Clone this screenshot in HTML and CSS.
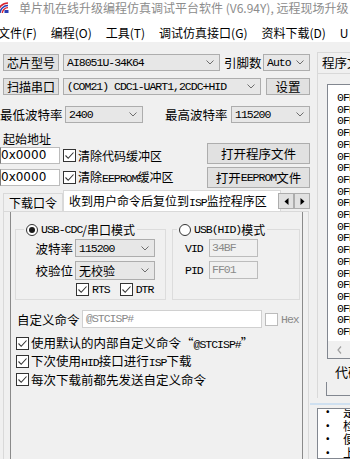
FILE: index.html
```html
<!DOCTYPE html>
<html lang="zh-CN">
<head>
<meta charset="utf-8">
<title>STC-ISP</title>
<link rel="stylesheet" href="styles.css">
</head>
<body>
<div class="window">
  <div class="titlebar">
    <svg class="appicon" viewBox="0 0 12 12" width="12" height="12">
      <path d="M0 11 A10 10 0 0 1 10 1" fill="none" stroke="#d9232d" stroke-width="1.6"/>
      <path d="M2 11 A8 8 0 0 1 10 3.5" fill="none" stroke="#2b3fb3" stroke-width="1.4"/>
      <path d="M4.3 11 A5.7 5.7 0 0 1 10 5.6" fill="none" stroke="#d9232d" stroke-width="1.4"/>
      <rect x="6.5" y="8" width="4" height="3" fill="#2b3fb3"/>
    </svg>
    <span class="title">单片机在线升级编程仿真调试平台软件 (V6.94Y), 远程现场升级</span>
  </div>
  <div class="menubar">
    <span class="mi first">文件(F)</span>
    <span class="mi">编程(O)</span>
    <span class="mi">工具(T)</span>
    <span class="mi">调试仿真接口(G)</span>
    <span class="mi">资料下载(D)</span>
    <span class="mi">U</span>
  </div>
  <div class="main">
    <div class="left">
      <div class="row r1">
        <div class="btn b-chip">芯片型号</div>
        <div class="combo c-chip"><span class="mono">AI8051U-34K64</span><svg class="chev" viewBox="0 0 8 5"><polyline points="0.5,0.5 4,4 7.5,0.5"/></svg></div>
        <span class="lbl l-pins">引脚数</span>
        <div class="combo c-pins"><span class="mono">Auto</span><svg class="chev" viewBox="0 0 8 5"><polyline points="0.5,0.5 4,4 7.5,0.5"/></svg></div>
      </div>
      <div class="row r2">
        <div class="btn b-chip">扫描串口</div>
        <div class="combo c-port"><span class="mono">(COM21) CDC1-UART1,2CDC+HID</span><svg class="chev" viewBox="0 0 8 5"><polyline points="0.5,0.5 4,4 7.5,0.5"/></svg></div>
        <div class="btn b-set">设置</div>
      </div>
      <div class="row r3">
        <span class="lbl l-baud">最低波特率</span>
        <div class="combo c-baud"><span class="mono">2400</span><svg class="chev" viewBox="0 0 8 5"><polyline points="0.5,0.5 4,4 7.5,0.5"/></svg></div>
        <span class="lbl l-baud2">最高波特率</span>
        <div class="combo c-baud2"><span class="mono">115200</span><svg class="chev" viewBox="0 0 8 5"><polyline points="0.5,0.5 4,4 7.5,0.5"/></svg></div>
      </div>
      <div class="addr-title">起始地址</div>
      <div class="addr-grid">
        <div class="addr-col">
          <div class="arow">
            <div class="edit addr">0x0000</div>
            <span class="chk on"><svg viewBox="0 0 11 11"><polyline points="1.5,5.5 4.2,8.3 9.5,2.5"/></svg></span>
            <span class="lbl">清除代码缓冲区</span>
          </div>
          <div class="arow">
            <div class="edit addr">0x0000</div>
            <span class="chk on"><svg viewBox="0 0 11 11"><polyline points="1.5,5.5 4.2,8.3 9.5,2.5"/></svg></span>
            <span class="lbl">清除<span class="mono">EEPROM</span>缓冲区</span>
          </div>
        </div>
        <div class="btn-col">
          <div class="btn b-open">打开程序文件</div>
          <div class="btn b-open">打开<span class="mono">EEPROM</span>文件</div>
        </div>
      </div>
      <div class="tabs">
        <div class="tab">下载口令</div>
        <div class="tab sel">收到用户命令后复位到<span class="mono">ISP</span>监控程序区</div>
        <div class="tabarrows">
          <span class="ta"><svg viewBox="0 0 5 7"><polygon points="4.5,0 0.5,3.5 4.5,7"/></svg></span>
          <span class="ta"><svg viewBox="0 0 5 7"><polygon points="0.5,0 4.5,3.5 0.5,7"/></svg></span>
        </div>
      </div>
      <div class="tabctl">
        <div class="page">
          <div class="groups">
            <fieldset class="grp g-cdc">
              <legend><span class="radio on"></span><span class="mono">USB-CDC</span>/串口模式</legend>
              <div class="frow"><span class="lbl flbl">波特率</span><div class="combo c-g"><span class="mono">115200</span><svg class="chev" viewBox="0 0 8 5"><polyline points="0.5,0.5 4,4 7.5,0.5"/></svg></div></div>
              <div class="frow f2"><span class="lbl flbl">校验位</span><div class="combo c-g"><span>无校验</span><svg class="chev" viewBox="0 0 8 5"><polyline points="0.5,0.5 4,4 7.5,0.5"/></svg></div></div>
              <div class="frow small">
                <span class="chk on"><svg viewBox="0 0 11 11"><polyline points="1.5,5.5 4.2,8.3 9.5,2.5"/></svg></span><span class="mono">RTS</span>
                <span class="chk on sp"><svg viewBox="0 0 11 11"><polyline points="1.5,5.5 4.2,8.3 9.5,2.5"/></svg></span><span class="mono">DTR</span>
              </div>
            </fieldset>
            <fieldset class="grp g-hid">
              <legend><span class="radio"></span><span class="mono">USB(HID)</span>模式</legend>
              <div class="hrow"><span class="mono hl">VID</span><div class="edit dis mono">34BF</div></div>
              <div class="hrow h2"><span class="mono hl">PID</span><div class="edit dis mono">FF01</div></div>
            </fieldset>
          </div>
          <div class="cmdrow">
            <span class="lbl cl">自定义命令</span>
            <div class="edit cmd mono">@STCISP#</div>
            <span class="chk dis"></span><span class="mono hex">Hex</span>
          </div>
          <div class="opts">
            <div class="opt"><span class="chk on"><svg viewBox="0 0 11 11"><polyline points="1.5,5.5 4.2,8.3 9.5,2.5"/></svg></span><span class="lbl">使用默认的内部自定义命令“<span class="mono">@STCISP#</span>”</span></div>
            <div class="opt"><span class="chk on"><svg viewBox="0 0 11 11"><polyline points="1.5,5.5 4.2,8.3 9.5,2.5"/></svg></span><span class="lbl">下次使用<span class="mono">HID</span>接口进行<span class="mono">ISP</span>下载</span></div>
            <div class="opt"><span class="chk on"><svg viewBox="0 0 11 11"><polyline points="1.5,5.5 4.2,8.3 9.5,2.5"/></svg></span><span class="lbl">每次下载前都先发送自定义命令</span></div>
          </div>
        </div>
      </div>
    </div>
    <div class="right">
      <div class="rtabs"><div class="rtab">程序文件</div></div>
      <div class="rpanel">
        <div class="listbox">
          <div class="lines mono">
            <div>0FFFFF</div><div>0FFFFF</div><div>0FFFFF</div><div>0FFFFF</div><div>0FFFFF</div>
            <div>0FFFFF</div><div>0FFFFF</div><div>0FFFFF</div><div>0FFFFF</div><div>0FFFFF</div>
            <div>0FFFFF</div><div>0FFFFF</div><div>0FFFFF</div><div>0FFFFF</div><div>0FFFFF</div>
            <div>0FFFFF</div><div>0FFFFF</div><div>0FFFFF</div><div>0FFFFF</div><div>0FFFFF</div>
            <div>0FFFFF</div>
          </div>
          <div class="hscroll"><svg viewBox="0 0 5 8"><polyline points="4,0.5 1,4 4,7.5"/></svg></div>
        </div>
        <div class="rlabel">代码</div>
        <div class="rbox"></div>
      </div>
      <div class="splitter"></div>
      <div class="notes">
        <div class="note"><i>·</i><span>是</span></div>
        <div class="note"><i>·</i><span>检</span></div>
        <div class="note"><i>·</i><span>便</span></div>
        <div class="note"><i>·</i><span>上</span></div>
      </div>
    </div>
  </div>
</div>
</body>
</html>
```

FILE: styles.css
```css
* { box-sizing: border-box; }
html, body { margin: 0; padding: 0; }
body {
  width: 350px; height: 459px; overflow: hidden;
  background: #f0f0f0;
  font-family: "Noto Sans CJK SC", "Noto Sans", sans-serif;
  font-size: 12px; color: #000;
}
.window { width: 350px; height: 459px; overflow: hidden; }
.mono { font-family: "Liberation Mono", "DejaVu Sans Mono", monospace; font-size: 11.5px; letter-spacing: -1px; }

.titlebar {
  height: 20px; background: #fff; display: flex; align-items: center;
  white-space: nowrap; overflow: hidden;
}
.appicon { margin-left: -2px; margin-top: -4px; flex: none; }
.title { margin-left: 9px; color: #8c8c8c; font-size: 12px; line-height: 16px; margin-top: -4px; }

.menubar {
  height: 22px; background: #fff; display: flex; align-items: center;
  white-space: nowrap; overflow: hidden; font-size: 12px; padding-top: 3px;
}
.mi { padding: 0 7px; line-height: 18px; }
.mi.first { margin-left: -9px; }

.main { display: flex; height: 417px; }
.left { width: 310px; flex: none; padding-top: 12px; }
.right { flex: 1; min-width: 0; display: flex; flex-direction: column; }

.row { display: flex; align-items: center; height: 17px; }
.r1 { padding-left: 3px; }
.r2 { padding-left: 3px; margin-top: 7px; }
.r3 { margin-top: 11px; }

.btn {
  background: #e1e1e1; border: 1px solid #adadad;
  display: flex; align-items: center; justify-content: center;
  height: 17px; font-size: 12px; line-height: 15px; white-space: nowrap;
}
.lbl { white-space: nowrap; font-size: 12px; line-height: 15px; }
.combo {
  background: #e7e7e7; border: 1px solid #adadad; height: 17px;
  display: flex; align-items: center; padding-left: 3px;
  white-space: nowrap;
}
.combo > span { flex: 1; overflow: hidden; line-height: 15px; }
.chev { width: 8px; height: 5px; flex: none; margin-right: 5px; }
.chev polyline { fill: none; stroke: #6d6d6d; stroke-width: 1; }

.b-chip { width: 56px; }
.c-chip { width: 157px; margin-left: 4px; }
.l-pins { margin-left: 4px; width: 39px; font-size: 12.5px; }
.c-pins { width: 47px; }
.c-port { width: 199px; margin-left: 4px; }
.b-set { width: 44px; margin-left: 5px; font-size: 12.5px; }
.l-baud { width: 65px; font-size: 12.5px; }
.c-baud { width: 78px; }
.l-baud2 { margin-left: 22px; width: 66px; font-size: 12.5px; }
.c-baud2 { width: 79px; }

.addr-title { margin: 8px 0 0 3px; font-size: 12px; line-height: 15px; height: 15px; }
.addr-grid { display: flex; justify-content: space-between; width: 310px; height: 42px; }
.addr-col { display: flex; flex-direction: column; gap: 5px; padding-top: 1px; }
.arow { display: flex; align-items: center; height: 17px; }
.edit {
  background: #fff; border: 1px solid #bcbcbc; height: 17px; line-height: 15px;
  padding-left: 1px; white-space: nowrap; overflow: hidden;
}
.edit.addr { width: 60px; font-family: "DejaVu Sans", "Noto Sans", sans-serif; font-size: 12px; padding-left: 0; border-left-color: #7a7a7a; }
.arow .chk { margin-left: 3px; margin-right: 2px; }
.btn-col { display: flex; flex-direction: column; gap: 3px; margin-top: -3px; }
.b-open { width: 103px; height: 21px; font-size: 12.5px; }

.chk {
  width: 13px; height: 13px; border: 1px solid #333; background: #fff;
  display: inline-flex; align-items: center; justify-content: center; flex: none;
}
.chk svg { width: 11px; height: 11px; }
.chk polyline { fill: none; stroke: #333; stroke-width: 1.1; }
.chk.dis { border-color: #bcbcbc; }

.tabs { display: flex; align-items: flex-end; height: 21px; margin-top: 2px; position: relative; width: 310px; }
.tab {
  height: 18px; border: 1px solid #d9d9d9; border-bottom: none; background: #f0f0f0;
  padding: 0 5px; font-size: 12px; line-height: 17px; white-space: nowrap; margin-left: 3px;
}
.tab.sel { height: 21px; background: #fff; margin-left: 0; line-height: 20px; padding: 0 5px; overflow: hidden; width: 218px; }
.tabarrows { position: absolute; right: 0; top: 3px; display: flex; }
.ta {
  width: 16px; height: 16px; border: 1px solid #adadad; background: #e1e1e1;
  display: flex; align-items: center; justify-content: center;
}
.ta svg { width: 5px; height: 7px; }
.ta polygon { fill: #000; }

.tabctl {
  margin-left: 3px; width: 306px; height: 248px; border: 1px solid #d9d9d9; border-bottom: none;
  padding: 0 0 0 6px;
}
.page {
  width: 293px; height: 100%; border-left: 1px solid #8a8a8a; border-right: 1px solid #8a8a8a;
  padding-top: 10px;
}
.groups { display: flex; }
.grp { margin: 0; border: 1px solid #dcdcdc; padding: 0; min-width: 0; }
.grp legend {
  display: flex; align-items: center; padding: 0 2px; font-size: 12px; line-height: 15px; height: 15px;
}
.radio {
  width: 12px; height: 12px; border: 1px solid #333; border-radius: 50%; background: #fff;
  display: inline-block; position: relative; margin-right: 3px; flex: none;
}
.radio.on::after {
  content: ""; position: absolute; left: 2px; top: 2px; width: 6px; height: 6px;
  border-radius: 50%; background: #1a1a1a;
}
.g-cdc { margin-left: 4px; width: 151px; height: 78px; }
.g-cdc legend { margin-left: 8px; }
.g-hid { margin-left: 6px; width: 128px; height: 78px; }
.g-hid legend { margin-left: 4px; }
.frow { display: flex; align-items: center; height: 18px; margin-top: 2px; padding-left: 19px; }
.frow.f2 { height: 19px; margin-top: 4px; }
.flbl { width: 38px; font-size: 12.5px; text-align: right; margin-right: 2px; }
.c-g { width: 80px; height: 100%; }
.frow.small { height: 13px; padding-left: 60px; margin-top: 3px; }
.frow.small .chk { margin-right: 3px; }
.frow.small .sp { margin-left: 10px; }
.hrow { display: flex; align-items: center; margin-top: 2px; padding-left: 12px; height: 18px; }
.hrow.h2 { margin-top: 4px; }
.hl { width: 24px; }
.edit.dis { background: #f0f0f0; color: #8a8a8a; width: 49px; height: 100%; line-height: 16px; padding-left: 2px; }

.cmdrow { display: flex; align-items: center; margin-top: 10px; padding-left: 6px; height: 18px; }
.cl { width: 60px; font-size: 12.5px; }
.cmd { width: 180px; height: 18px; margin-left: 5px; color: #8a8a8a; line-height: 16px; padding-left: 3px; border-color: #d0d0d0; }
.cmdrow .chk { margin-left: 3px; margin-right: 3px; }
.hex { color: #8a8a8a; }

.opts { margin-top: 6px; padding-left: 5px; display: flex; flex-direction: column; }
.opt { display: flex; align-items: center; height: 18px; gap: 2px; }
.opt .lbl { font-size: 12.5px; }

.rtabs { margin-top: 10px; padding-left: 7px; height: 21px; display: flex; align-items: flex-end; }
.rtab {
  height: 21px; border: 1px solid #d9d9d9; border-bottom: none; border-right: none; background: #f0f0f0;
  padding-left: 4px; font-size: 12.5px; line-height: 20px; white-space: nowrap; flex: 1;
}
.rpanel { margin-left: 7px; border-left: 1px solid #d9d9d9; border-top: 1px solid #d9d9d9; height: 325px; padding-top: 10px; }
.listbox {
  margin-left: 9px; height: 275px; border: 1px solid #828790; border-right: none;
  background: #fff; display: flex; flex-direction: column;
}
.lines { flex: 1; padding-left: 9px; padding-top: 7px; line-height: 11.7px; overflow: hidden; }
.hscroll { height: 17px; background: #f0f0f0; display: flex; align-items: center; padding-left: 9px; }
.hscroll svg { width: 5px; height: 8px; }
.hscroll polyline { fill: none; stroke: #a0a0a0; stroke-width: 1.2; }
.rlabel { margin-top: 5px; padding-left: 17px; white-space: nowrap; font-size: 13px; line-height: 15px; }
.rbox { margin-top: 3px; margin-left: 8px; height: 14px; border: 1px solid #828790; border-right: none; border-top: none; }
.splitter { height: 2px; background: #cfe0f0; margin-top: 5px; }
.notes {
  margin-top: 3px; margin-left: 7px; flex: 1; background: #fff; border: 1px solid #828790; border-right: none;
  font-size: 12.5px; line-height: 13.7px; overflow: hidden;
}
.note { display: flex; white-space: nowrap; height: 13.7px; }
.note:first-child { margin-top: -4px; }
.note i { font-style: normal; width: 16px; flex: none; text-align: right; }
.note span { margin-left: 9px; }
```
